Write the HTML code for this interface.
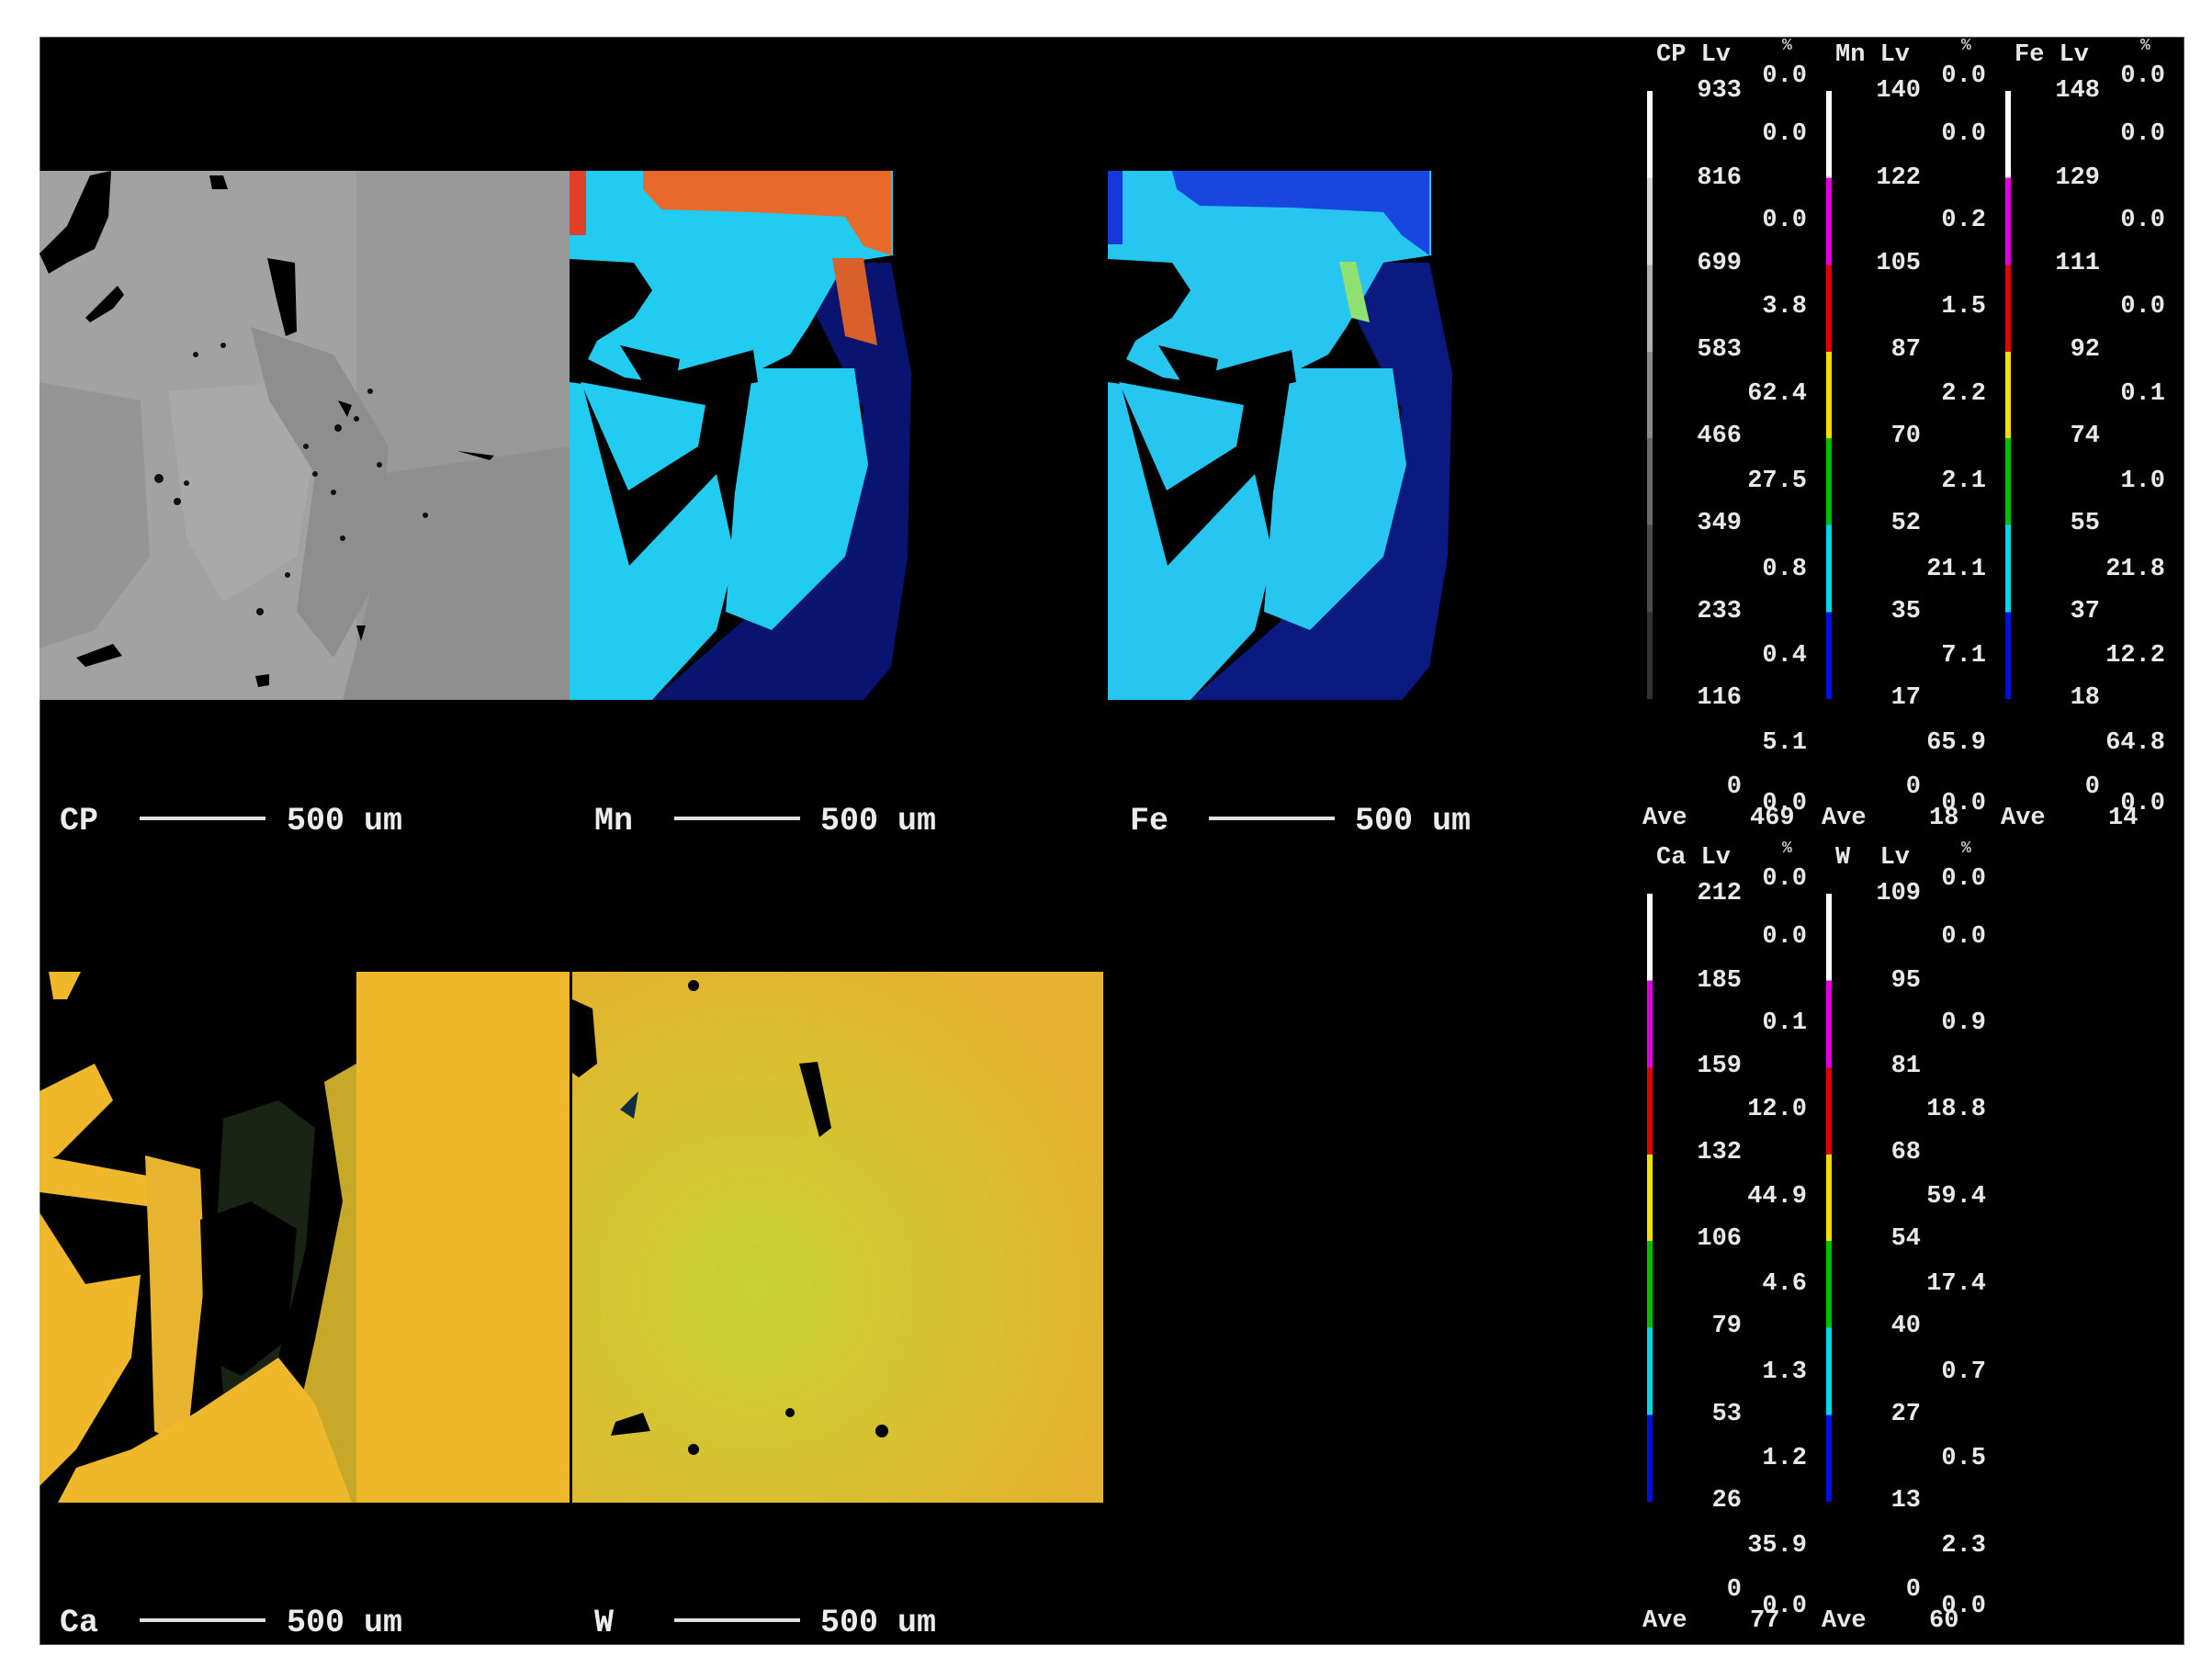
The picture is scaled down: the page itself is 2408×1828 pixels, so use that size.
<!DOCTYPE html>
<html><head><meta charset="utf-8"><style>
html,body{margin:0;padding:0;background:#fff;width:2408px;height:1828px;overflow:hidden;position:relative}
#bk{position:absolute;left:43px;top:40px;width:2335px;height:1751px;background:#000;border:1px solid #555;box-sizing:border-box}
.lbl{position:absolute;font-family:"Liberation Mono",monospace;font-weight:bold;color:#ececec;font-size:35px;line-height:36px;white-space:pre}
.sl{position:absolute;height:4px;background:#e0e0e0}
.col{position:absolute;width:200px;height:900px}
.col .r{position:absolute;text-align:right;font-family:"Liberation Mono",monospace;font-weight:bold;color:#e8e8e8;font-size:27px;line-height:28px;white-space:pre}
.col .lv{left:0;width:146px}
.col .pc{left:0;width:217px}
.bar{position:absolute;left:43px;top:99px;width:6px;height:662px}
.pct{position:absolute;font-family:"Liberation Mono",monospace;font-weight:bold;color:#ccc;font-size:18px}
svg{position:absolute}
</style></head><body>
<div id="bk"></div>

<!-- CP image -->
<svg style="left:43px;top:186px" width="577" height="576" viewBox="0 0 577 576">
<rect width="577" height="576" fill="#a2a2a2"/>
<rect x="345" y="0" width="232" height="576" fill="#999"/>
<polygon points="370,330 577,300 577,576 330,576 360,460" fill="#8f8f8f"/>
<polygon points="0,230 110,250 120,420 60,500 0,520" fill="#959595"/>
<polygon points="140,240 260,230 300,300 280,420 200,470 160,400" fill="#a9a9a9"/>
<polygon points="230,170 320,200 380,300 370,440 320,530 280,480 300,330 250,250" fill="#8e8e8e"/>
<path d="M0,90 L30,60 L55,5 L78,0 L75,50 L60,85 L30,100 L10,112 Z" fill="#000"/>
<path d="M50,160 L85,125 L92,135 L80,150 L55,165 Z" fill="#000"/>
<path d="M248,95 L278,100 L280,175 L268,180 L258,140 Z" fill="#000"/>
<path d="M40,530 L80,515 L90,528 L50,540 Z" fill="#000"/>
<path d="M185,5 L200,5 L205,20 L188,20 Z M235,550 L250,548 L250,560 L238,562 Z M325,250 L340,255 L335,268 Z M345,495 L355,495 L350,512 Z M455,305 L495,310 L490,315 Z" fill="#000"/>
<g fill="#111">
<circle cx="325" cy="280" r="4"/><circle cx="290" cy="300" r="3"/><circle cx="300" cy="330" r="3"/><circle cx="345" cy="270" r="3"/><circle cx="130" cy="335" r="5"/><circle cx="150" cy="360" r="4"/><circle cx="160" cy="340" r="3"/><circle cx="360" cy="240" r="3"/><circle cx="370" cy="320" r="3"/><circle cx="200" cy="190" r="3"/><circle cx="170" cy="200" r="3"/><circle cx="420" cy="375" r="3"/><circle cx="320" cy="350" r="3"/><circle cx="240" cy="480" r="4"/><circle cx="270" cy="440" r="3"/><circle cx="330" cy="400" r="3"/>
</g>
</svg>

<!-- Mn -->
<svg style="left:620px;top:186px" width="580" height="576" viewBox="0 0 580 576">
<polygon points="240,100 350,100 372,220 368,420 350,540 320,576 90,576 200,480 300,400 320,260" fill="#081470"/>
<polygon points="0,0 352,0 352,92 300,100 260,170 240,200 180,230 130,235 60,225 20,205 30,185 70,160 90,130 70,100 0,96" fill="#22ccf0"/>
<polygon points="12,230 148,255 140,300 64,348" fill="#22ccf0"/>
<polygon points="0,230 14,232 65,430 160,330 180,420 160,500 90,576 0,576" fill="#22ccf0"/>
<polygon points="200,215 310,215 325,320 300,420 220,500 170,480 180,350" fill="#22ccf0"/>
<polygon points="80,0 350,0 350,92 320,82 300,50 200,45 100,42 80,20" fill="#e86a2a"/>
<rect x="0" y="0" width="18" height="70" fill="#e0402a"/>
<polygon points="286,95 320,95 335,190 300,180" fill="#d8602a"/>
<polygon points="55,190 120,205 115,235 80,230" fill="#000"/>
<polygon points="90,225 200,195 205,230 130,245" fill="#000"/>
</svg>
<!-- Fe -->
<svg style="left:1206px;top:186px" width="580" height="576" viewBox="0 0 580 576">
<polygon points="240,100 350,100 375,220 370,420 350,540 320,576 90,576 200,480 300,400 320,260" fill="#0a1a80"/>
<polygon points="0,0 352,0 352,92 300,100 260,170 240,200 180,230 130,235 60,225 20,205 30,185 70,160 90,130 70,100 0,96" fill="#26c6f0"/>
<polygon points="12,230 148,255 140,300 64,348" fill="#26c6f0"/>
<polygon points="0,230 14,232 65,430 160,330 180,420 160,500 90,576 0,576" fill="#26c6f0"/>
<polygon points="200,215 310,215 325,320 300,420 220,500 170,480 180,350" fill="#26c6f0"/>
<polygon points="70,0 350,0 350,92 320,70 300,45 200,40 100,38 75,20" fill="#1a46e0"/>
<rect x="0" y="0" width="16" height="80" fill="#1638d8"/>
<polygon points="252,99 270,99 285,165 265,160" fill="#8ee070"/>
<polygon points="55,190 120,205 115,235 80,230" fill="#000"/>
<polygon points="90,225 200,195 205,230 130,245" fill="#000"/>
</svg>

<!-- Ca -->
<svg style="left:43px;top:1058px" width="577" height="578" viewBox="0 0 577 578">
<rect x="345" y="0" width="232" height="578" fill="#eeb82a"/>
<polygon points="310,120 345,100 345,578 260,578 300,400 330,250" fill="#c8a828"/>
<polygon points="10,0 45,0 30,30 15,30" fill="#eeb82a"/>
<polygon points="0,130 60,100 80,140 20,200 0,210" fill="#eeb82a"/>
<polygon points="0,200 160,230 170,262 0,240" fill="#eeb82a"/>
<polygon points="0,262 50,340 110,330 100,420 40,520 0,560" fill="#eeb82a"/>
<polygon points="115,200 175,215 180,330 160,520 125,500 120,330" fill="#e8b430"/>
<polygon points="170,480 260,420 300,470 340,578 20,578 40,540 100,520" fill="#eeb82a"/>
<polygon points="200,160 260,140 300,170 290,300 260,420 200,460 190,330" fill="#1a2414"/>
<polygon points="175,270 230,250 280,280 270,400 220,440 180,420" fill="#000"/>
</svg>
<!-- W -->
<svg style="left:620px;top:1058px" width="581" height="578" viewBox="0 0 581 578">
<defs><radialGradient id="wg" cx="0.35" cy="0.6" r="0.7"><stop offset="0" stop-color="#c8d234"/><stop offset="1" stop-color="#e4b22e"/></radialGradient></defs>
<rect x="0" y="0" width="581" height="578" fill="url(#wg)"/>
<rect x="0" y="0" width="3" height="578" fill="#000"/>
<polygon points="3,30 25,40 30,100 10,115 3,110" fill="#000"/>
<polygon points="250,100 270,98 285,170 272,180" fill="#000"/>
<polygon points="50,490 80,480 88,500 45,505" fill="#000"/>
<polygon points="55,150 75,130 70,160" fill="#103040"/>
<circle cx="135" cy="15" r="6" fill="#000"/>
<circle cx="340" cy="500" r="7" fill="#000"/>
<circle cx="135" cy="520" r="6" fill="#000"/>
<circle cx="240" cy="480" r="5" fill="#000"/>
</svg>

<div class="lbl" style="left:65px;top:876px">CP</div><div class="sl" style="left:152px;top:889px;width:137px"></div><div class="lbl" style="left:312px;top:876px">500 um</div>
<div class="lbl" style="left:647px;top:876px">Mn</div><div class="sl" style="left:734px;top:889px;width:137px"></div><div class="lbl" style="left:893px;top:876px">500 um</div>
<div class="lbl" style="left:1230px;top:876px">Fe</div><div class="sl" style="left:1316px;top:889px;width:137px"></div><div class="lbl" style="left:1475px;top:876px">500 um</div>
<div class="lbl" style="left:65px;top:1749px">Ca</div><div class="sl" style="left:152px;top:1762px;width:137px"></div><div class="lbl" style="left:312px;top:1749px">500 um</div>
<div class="lbl" style="left:647px;top:1749px">W</div><div class="sl" style="left:734px;top:1762px;width:137px"></div><div class="lbl" style="left:893px;top:1749px">500 um</div>

<div class="col" style="left:1750px;top:0">
<div class="r" style="left:53px;top:46px">CP Lv</div><div class="pct" style="left:190px;top:40px">%</div>
<div class="bar" style="background:linear-gradient(#fff 0 14.3%,#d8d8d8 14.3% 28.6%,#b0b0b0 28.6% 42.9%,#8c8c8c 42.9% 57.1%,#6a6a6a 57.1% 71.4%,#4c4c4c 71.4% 85.7%,#333 85.7%)"></div>
<div class="r lv" style="top:85px">933</div><div class="r lv" style="top:180px">816</div><div class="r lv" style="top:273px">699</div><div class="r lv" style="top:367px">583</div><div class="r lv" style="top:461px">466</div><div class="r lv" style="top:556px">349</div><div class="r lv" style="top:652px">233</div><div class="r lv" style="top:746px">116</div><div class="r lv" style="top:843px">0</div>
<div class="r pc" style="top:69px">0.0</div><div class="r pc" style="top:132px">0.0</div><div class="r pc" style="top:226px">0.0</div><div class="r pc" style="top:320px">3.8</div><div class="r pc" style="top:415px">62.4</div><div class="r pc" style="top:510px">27.5</div><div class="r pc" style="top:606px">0.8</div><div class="r pc" style="top:700px">0.4</div><div class="r pc" style="top:795px">5.1</div><div class="r pc" style="top:861px">0.0</div>
<div class="r" style="left:38px;top:877px">Ave</div><div class="r" style="left:155px;top:877px">469</div>
</div>
<div class="col" style="left:1945px;top:0">
<div class="r" style="left:53px;top:46px">Mn Lv</div><div class="pct" style="left:190px;top:40px">%</div>
<div class="bar" style="background:linear-gradient(#fff 0 14.3%,#e000e0 14.3% 28.6%,#e00000 28.6% 42.9%,#f0e000 42.9% 57.1%,#00c000 57.1% 71.4%,#00d8e8 71.4% 85.7%,#0010e0 85.7%)"></div>
<div class="r lv" style="top:85px">140</div><div class="r lv" style="top:180px">122</div><div class="r lv" style="top:273px">105</div><div class="r lv" style="top:367px">87</div><div class="r lv" style="top:461px">70</div><div class="r lv" style="top:556px">52</div><div class="r lv" style="top:652px">35</div><div class="r lv" style="top:746px">17</div><div class="r lv" style="top:843px">0</div>
<div class="r pc" style="top:69px">0.0</div><div class="r pc" style="top:132px">0.0</div><div class="r pc" style="top:226px">0.2</div><div class="r pc" style="top:320px">1.5</div><div class="r pc" style="top:415px">2.2</div><div class="r pc" style="top:510px">2.1</div><div class="r pc" style="top:606px">21.1</div><div class="r pc" style="top:700px">7.1</div><div class="r pc" style="top:795px">65.9</div><div class="r pc" style="top:861px">0.0</div>
<div class="r" style="left:38px;top:877px">Ave</div><div class="r" style="left:155px;top:877px">18</div>
</div>
<div class="col" style="left:2140px;top:0">
<div class="r" style="left:53px;top:46px">Fe Lv</div><div class="pct" style="left:190px;top:40px">%</div>
<div class="bar" style="background:linear-gradient(#fff 0 14.3%,#e000e0 14.3% 28.6%,#e00000 28.6% 42.9%,#f0e000 42.9% 57.1%,#00c000 57.1% 71.4%,#00d8e8 71.4% 85.7%,#0010e0 85.7%)"></div>
<div class="r lv" style="top:85px">148</div><div class="r lv" style="top:180px">129</div><div class="r lv" style="top:273px">111</div><div class="r lv" style="top:367px">92</div><div class="r lv" style="top:461px">74</div><div class="r lv" style="top:556px">55</div><div class="r lv" style="top:652px">37</div><div class="r lv" style="top:746px">18</div><div class="r lv" style="top:843px">0</div>
<div class="r pc" style="top:69px">0.0</div><div class="r pc" style="top:132px">0.0</div><div class="r pc" style="top:226px">0.0</div><div class="r pc" style="top:320px">0.0</div><div class="r pc" style="top:415px">0.1</div><div class="r pc" style="top:510px">1.0</div><div class="r pc" style="top:606px">21.8</div><div class="r pc" style="top:700px">12.2</div><div class="r pc" style="top:795px">64.8</div><div class="r pc" style="top:861px">0.0</div>
<div class="r" style="left:38px;top:877px">Ave</div><div class="r" style="left:155px;top:877px">14</div>
</div>
<div class="col" style="left:1750px;top:874px">
<div class="r" style="left:53px;top:46px">Ca Lv</div><div class="pct" style="left:190px;top:40px">%</div>
<div class="bar" style="background:linear-gradient(#fff 0 14.3%,#e000e0 14.3% 28.6%,#e00000 28.6% 42.9%,#f0e000 42.9% 57.1%,#00c000 57.1% 71.4%,#00d8e8 71.4% 85.7%,#0010e0 85.7%)"></div>
<div class="r lv" style="top:85px">212</div><div class="r lv" style="top:180px">185</div><div class="r lv" style="top:273px">159</div><div class="r lv" style="top:367px">132</div><div class="r lv" style="top:461px">106</div><div class="r lv" style="top:556px">79</div><div class="r lv" style="top:652px">53</div><div class="r lv" style="top:746px">26</div><div class="r lv" style="top:843px">0</div>
<div class="r pc" style="top:69px">0.0</div><div class="r pc" style="top:132px">0.0</div><div class="r pc" style="top:226px">0.1</div><div class="r pc" style="top:320px">12.0</div><div class="r pc" style="top:415px">44.9</div><div class="r pc" style="top:510px">4.6</div><div class="r pc" style="top:606px">1.3</div><div class="r pc" style="top:700px">1.2</div><div class="r pc" style="top:795px">35.9</div><div class="r pc" style="top:861px">0.0</div>
<div class="r" style="left:38px;top:877px">Ave</div><div class="r" style="left:155px;top:877px">77</div>
</div>
<div class="col" style="left:1945px;top:874px">
<div class="r" style="left:53px;top:46px">W  Lv</div><div class="pct" style="left:190px;top:40px">%</div>
<div class="bar" style="background:linear-gradient(#fff 0 14.3%,#e000e0 14.3% 28.6%,#e00000 28.6% 42.9%,#f0e000 42.9% 57.1%,#00c000 57.1% 71.4%,#00d8e8 71.4% 85.7%,#0010e0 85.7%)"></div>
<div class="r lv" style="top:85px">109</div><div class="r lv" style="top:180px">95</div><div class="r lv" style="top:273px">81</div><div class="r lv" style="top:367px">68</div><div class="r lv" style="top:461px">54</div><div class="r lv" style="top:556px">40</div><div class="r lv" style="top:652px">27</div><div class="r lv" style="top:746px">13</div><div class="r lv" style="top:843px">0</div>
<div class="r pc" style="top:69px">0.0</div><div class="r pc" style="top:132px">0.0</div><div class="r pc" style="top:226px">0.9</div><div class="r pc" style="top:320px">18.8</div><div class="r pc" style="top:415px">59.4</div><div class="r pc" style="top:510px">17.4</div><div class="r pc" style="top:606px">0.7</div><div class="r pc" style="top:700px">0.5</div><div class="r pc" style="top:795px">2.3</div><div class="r pc" style="top:861px">0.0</div>
<div class="r" style="left:38px;top:877px">Ave</div><div class="r" style="left:155px;top:877px">60</div>
</div>
</body></html>
